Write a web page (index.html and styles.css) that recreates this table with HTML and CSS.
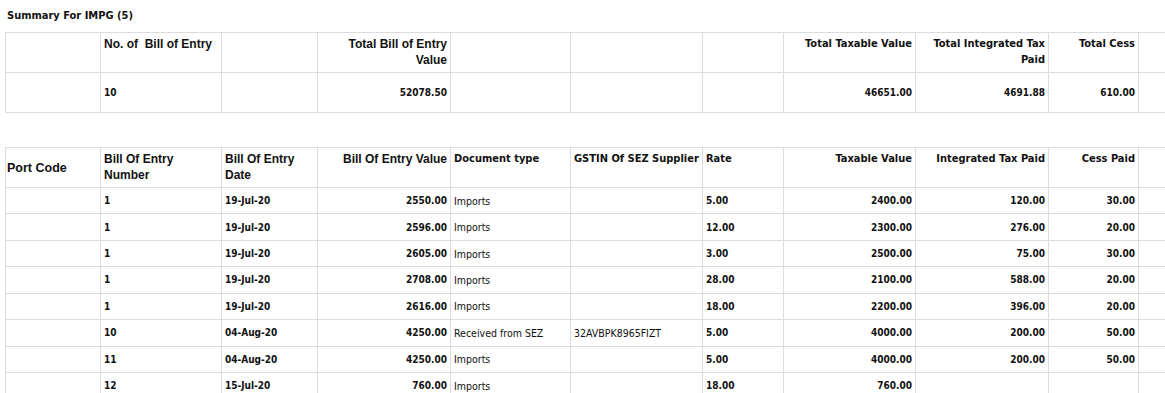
FILE: index.html
```html
<!DOCTYPE html>
<html>
<head>
    <title>Summary For IMPG</title>
    <link rel="stylesheet" href="styles.css">
</head>
<body>
    <div class="title">Summary For IMPG (5)</div>

    <table class="grid summary">
        <colgroup>
            <col class="c1"><col class="c2"><col class="c3"><col class="c4"><col class="c5"><col class="c6"><col class="c7"><col class="c8"><col class="c9"><col class="c10"><col class="c11">
        </colgroup>
        <tr class="head">
            <th></th>
            <th class="wide">No. of&nbsp; Bill of Entry</th>
            <th></th>
            <th class="wide num">Total Bill of Entry Value</th>
            <th></th>
            <th></th>
            <th></th>
            <th class="num">Total Taxable Value</th>
            <th class="num">Total Integrated Tax Paid</th>
            <th class="num">Total Cess</th>
            <th></th>
        </tr>
        <tr class="tall">
            <td></td>
            <td>10</td>
            <td></td>
            <td class="num">52078.50</td>
            <td></td>
            <td></td>
            <td></td>
            <td class="num">46651.00</td>
            <td class="num">4691.88</td>
            <td class="num">610.00</td>
            <td></td>
        </tr>
    </table>

    <table class="grid detail">
        <colgroup>
            <col class="c1"><col class="c2"><col class="c3"><col class="c4"><col class="c5"><col class="c6"><col class="c7"><col class="c8"><col class="c9"><col class="c10"><col class="c11">
        </colgroup>
        <tr class="head">
            <th class="port">Port Code</th>
            <th class="wide">Bill Of Entry Number</th>
            <th class="wide">Bill Of Entry Date</th>
            <th class="wide num">Bill Of Entry Value</th>
            <th>Document type</th>
            <th>GSTIN Of SEZ Supplier</th>
            <th>Rate</th>
            <th class="num">Taxable Value</th>
            <th class="num">Integrated Tax Paid</th>
            <th class="num">Cess Paid</th>
            <th></th>
        </tr>
        <tr><td></td><td>1</td><td>19-Jul-20</td><td class="num">2550.00</td><td class="txt">Imports</td><td></td><td>5.00</td><td class="num">2400.00</td><td class="num">120.00</td><td class="num">30.00</td><td></td></tr>
        <tr><td></td><td>1</td><td>19-Jul-20</td><td class="num">2596.00</td><td class="txt">Imports</td><td></td><td>12.00</td><td class="num">2300.00</td><td class="num">276.00</td><td class="num">20.00</td><td></td></tr>
        <tr><td></td><td>1</td><td>19-Jul-20</td><td class="num">2605.00</td><td class="txt">Imports</td><td></td><td>3.00</td><td class="num">2500.00</td><td class="num">75.00</td><td class="num">30.00</td><td></td></tr>
        <tr><td></td><td>1</td><td>19-Jul-20</td><td class="num">2708.00</td><td class="txt">Imports</td><td></td><td>28.00</td><td class="num">2100.00</td><td class="num">588.00</td><td class="num">20.00</td><td></td></tr>
        <tr><td></td><td>1</td><td>19-Jul-20</td><td class="num">2616.00</td><td class="txt">Imports</td><td></td><td>18.00</td><td class="num">2200.00</td><td class="num">396.00</td><td class="num">20.00</td><td></td></tr>
        <tr><td></td><td>10</td><td>04-Aug-20</td><td class="num">4250.00</td><td class="txt">Received from SEZ</td><td class="txt">32AVBPK8965FIZT</td><td>5.00</td><td class="num">4000.00</td><td class="num">200.00</td><td class="num">50.00</td><td></td></tr>
        <tr><td></td><td>11</td><td>04-Aug-20</td><td class="num">4250.00</td><td class="txt">Imports</td><td></td><td>5.00</td><td class="num">4000.00</td><td class="num">200.00</td><td class="num">50.00</td><td></td></tr>
        <tr><td></td><td>12</td><td>15-Jul-20</td><td class="num">760.00</td><td class="txt">Imports</td><td></td><td>18.00</td><td class="num">760.00</td><td></td><td></td><td></td></tr>
    </table>
</body>
</html>
```

FILE: styles.css
```css
html {
    overflow: hidden;
}

body {
    margin: 0;
    padding: 0 0 0 5px;
    font-family: "DejaVu Sans Condensed", "DejaVu Sans", sans-serif;
    font-size: 10px;
    font-weight: bold;
    color: #111;
    background: #fff;
}

.title {
    font-size: 11px;
    padding: 9px 0 0 2px;
    height: 23px;
}

.grid {
    border-collapse: collapse;
    table-layout: fixed;
    width: 1173px;
}

.grid th,
.grid td {
    border: 1px solid #dcdcdc;
    padding: 0 3px;
    overflow: hidden;
    white-space: nowrap;
}

.grid th {
    text-align: left;
    vertical-align: top;
    padding-top: 3px;
    line-height: 16px;
    white-space: normal;
    font-size: 11px;
}

.grid td {
    vertical-align: middle;
}

.grid .num {
    text-align: right;
}

.grid .wide {
    font-family: "Liberation Sans", Arial, sans-serif;
    font-size: 12px;
}

.grid .port {
    font-family: "Liberation Sans", Arial, sans-serif;
    font-size: 12.5px;
    vertical-align: middle;
    padding: 0 0 0 1px;
}

.grid .txt {
    font-weight: normal;
    font-size: 10.5px;
}

.head {
    height: 40px;
}

.tall {
    height: 40px;
}

.detail tr {
    height: 26.43px;
}

.detail tr.head {
    height: 40px;
}

.summary {
    margin-bottom: 34px;
}

.c1 { width: 95px; }
.c2 { width: 121px; }
.c3 { width: 96px; }
.c4 { width: 133px; }
.c5 { width: 120px; }
.c6 { width: 132px; }
.c7 { width: 81px; }
.c8 { width: 132px; }
.c9 { width: 133px; }
.c10 { width: 90px; }
.c11 { width: 40px; }
```
